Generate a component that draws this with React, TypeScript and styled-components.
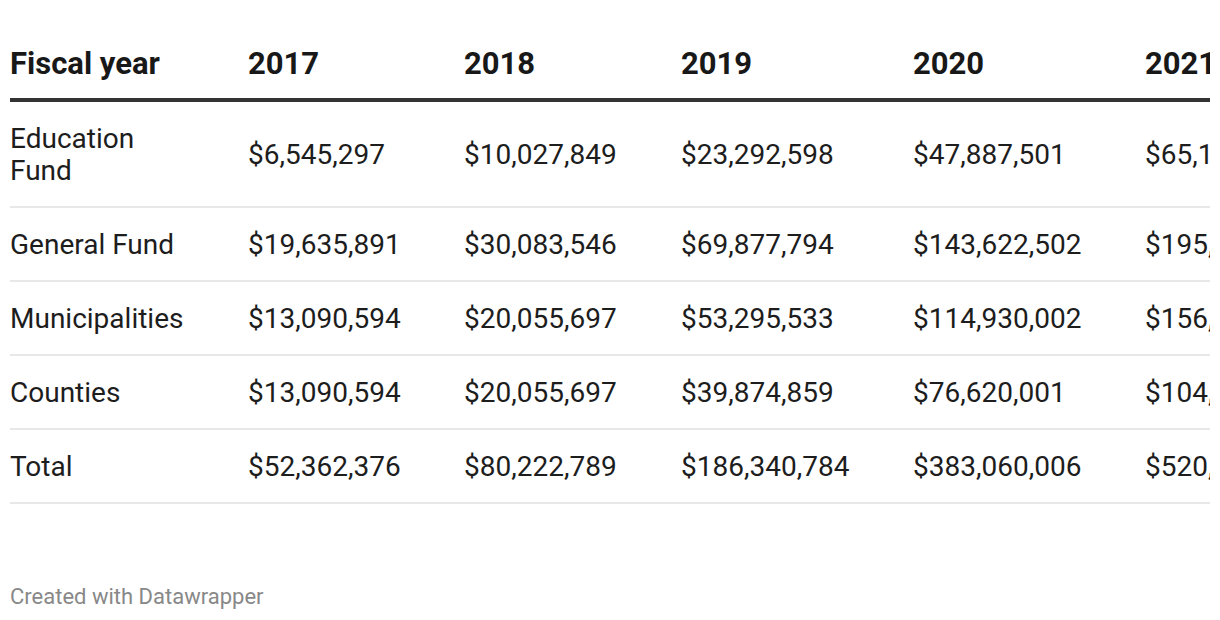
import styled, { createGlobalStyle } from 'styled-components';

const GlobalStyle = createGlobalStyle`
  html, body {
    margin: 0;
    padding: 0;
    background: #ffffff;
  }
  body {
    font-family: Roboto, "Liberation Sans", sans-serif;
    color: #1d1d1d;
  }
`;

const years = ['2017', '2018', '2019', '2020', '2021'];
const widths = [238, 216, 217, 232, 232, 232];

const rows: { label: string; values: string[] }[] = [
  {
    label: 'Education Fund',
    values: ['$6,545,297', '$10,027,849', '$23,292,598', '$47,887,501', '$65,142,874'],
  },
  {
    label: 'General Fund',
    values: ['$19,635,891', '$30,083,546', '$69,877,794', '$143,622,502', '$195,428,622'],
  },
  {
    label: 'Municipalities',
    values: ['$13,090,594', '$20,055,697', '$53,295,533', '$114,930,002', '$156,380,748'],
  },
  {
    label: 'Counties',
    values: ['$13,090,594', '$20,055,697', '$39,874,859', '$76,620,001', '$104,253,748'],
  },
  {
    label: 'Total',
    values: ['$52,362,376', '$80,222,789', '$186,340,784', '$383,060,006', '$520,605,992'],
  },
];

export default function App() {
  return (
    <>
      <GlobalStyle />
      <Chart>
        <TableScroll>
          <Table>
            <colgroup>
              {widths.map((w, i) => (
                <col key={i} style={{ width: w }} />
              ))}
            </colgroup>
            <thead>
              <tr>
                <HeadCell>Fiscal year</HeadCell>
                {years.map((y) => (
                  <HeadCell key={y}>{y}</HeadCell>
                ))}
              </tr>
            </thead>
            <tbody>
              {rows.map((r) => (
                <tr key={r.label}>
                  <LabelCell>
                    <LabelText>{r.label}</LabelText>
                  </LabelCell>
                  {r.values.map((v, i) => (
                    <Cell key={i}>{v}</Cell>
                  ))}
                </tr>
              ))}
            </tbody>
          </Table>
        </TableScroll>
        <Footer>Created with Datawrapper</Footer>
      </Chart>
    </>
  );
}

const Chart = styled.div`
  width: 1220px;
  height: 620px;
  padding: 27px 10px 0;
  box-sizing: border-box;
  display: flex;
  flex-direction: column;
`;

const TableScroll = styled.div`
  width: 1200px;
  overflow: hidden;
`;

const Table = styled.table`
  table-layout: fixed;
  width: 1367px;
  border-collapse: collapse;
  font-size: 28px;
  line-height: 32px;
`;

const HeadCell = styled.th`
  text-align: left;
  font-size: 31px;
  font-weight: 700;
  color: #181818;
  padding: 21px 0 18px;
  border-bottom: 4px solid #333333;
  white-space: nowrap;
  overflow: hidden;
`;

const Cell = styled.td`
  padding: 21px 0 19px;
  border-bottom: 2px solid #e8e8e8;
  white-space: nowrap;
  overflow: hidden;
  color: #1d1d1d;
`;

const LabelCell = styled(Cell)`
  white-space: normal;
`;

const LabelText = styled.span`
  display: block;
  max-width: 180px;
`;

const Footer = styled.div`
  margin-top: auto;
  margin-bottom: 9px;
  font-size: 22px;
  line-height: 28px;
  color: #888888;
`;
